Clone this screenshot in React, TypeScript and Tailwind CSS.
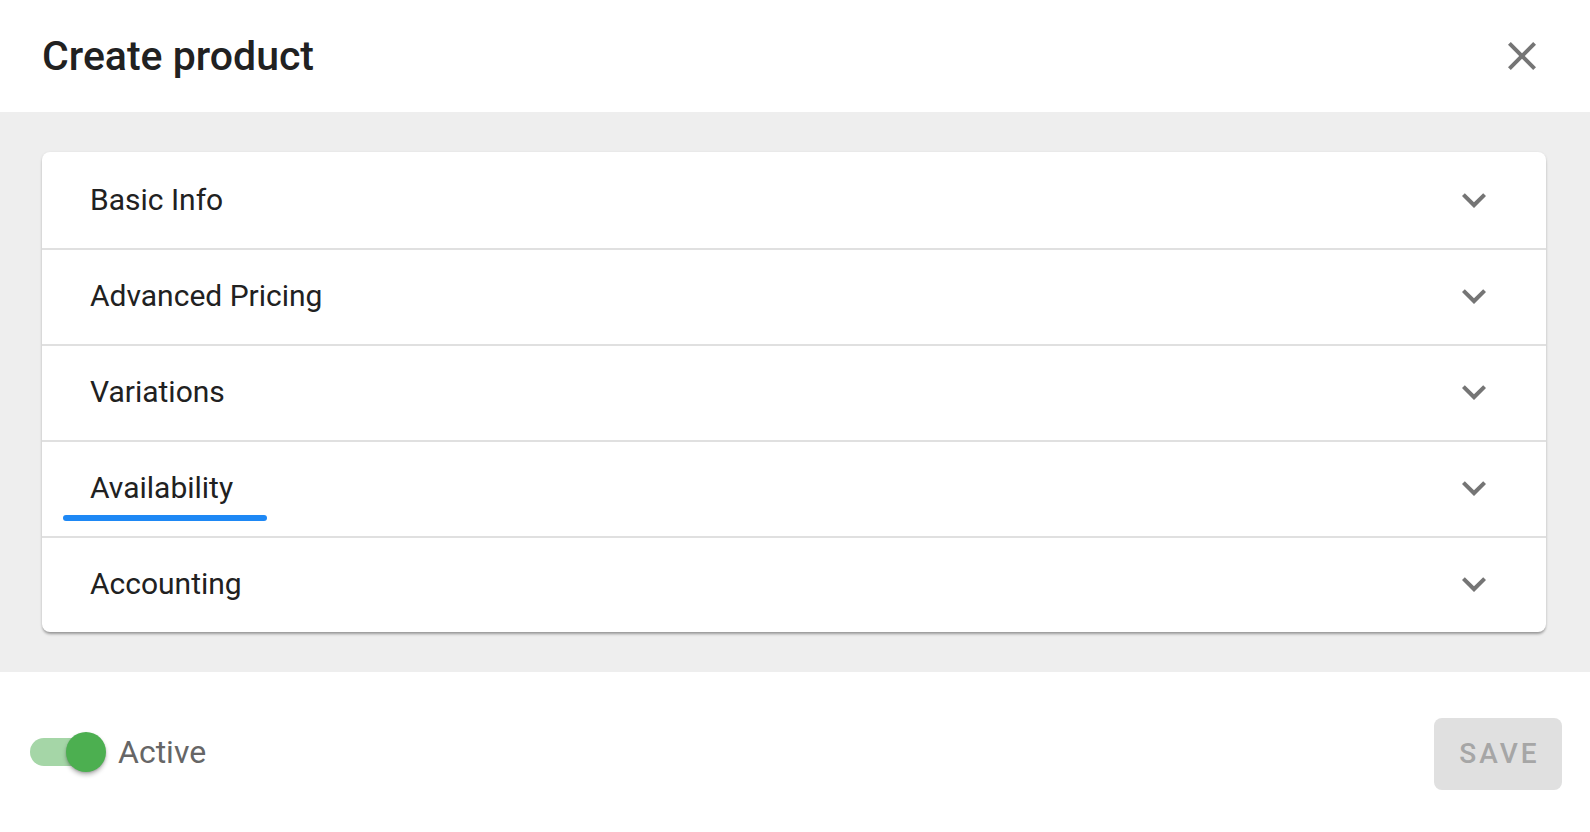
import React, { useState } from 'react';

const sections = ['Basic Info', 'Advanced Pricing', 'Variations', 'Availability', 'Accounting'];

const ExpandIcon = () => (
  <svg viewBox="0 0 24 24" className="w-12 h-12 fill-[#757575]">
    <path d="M16.59 8.59 12 13.17 7.41 8.59 6 10l6 6 6-6z" />
  </svg>
);

const CloseIcon = () => (
  <svg viewBox="0 0 24 24" className="w-12 h-12 fill-[#757575]">
    <path d="M19 6.41 17.59 5 12 10.59 6.41 5 5 6.41 10.59 12 5 17.59 6.41 19 12 13.41 17.59 19 19 17.59 13.41 12z" />
  </svg>
);

const App = () => {
  const [active, setActive] = useState(true);

  return (
    <div className="w-[1590px] h-[832px] bg-white flex flex-col font-['Roboto',sans-serif]">
      {/* Header */}
      <div className="h-[112px] flex items-center justify-between pl-[42px] pr-[44px]">
        <h1 className="text-[41px] font-medium text-[#212121] leading-none">Create product</h1>
        <button className="w-12 h-12 flex items-center justify-center">
          <CloseIcon />
        </button>
      </div>

      {/* Accordion area */}
      <div className="bg-[#eeeeee] pt-[40px] pb-[40px] pl-[42px] pr-[44px]">
        <div className="bg-white rounded-[8px] shadow-[0_3px_3px_-1px_rgba(0,0,0,0.3),0_1px_3px_rgba(0,0,0,0.14)] overflow-hidden">
          {sections.map((name, i) => (
            <div
              key={name}
              className={`relative h-[96px] flex items-center justify-between pl-[48px] pr-[48px] ${
                i > 0 ? 'border-t-2 border-[#e0e0e0] pb-[2px]' : ''
              }`}
            >
              <span className="text-[30px] text-[#212121] leading-none">{name}</span>
              <ExpandIcon />
              {/* focus underline */}
              {name === 'Availability' && (
                <div className="absolute left-[21px] top-[73px] w-[204px] h-[6px] rounded-full bg-[#1e88f5]" />
              )}
            </div>
          ))}
        </div>
      </div>

      {/* Footer */}
      <div className="flex-1 flex items-center justify-between pl-[30px] pr-[28px]">
        <div className="flex items-center">
          <button
            onClick={() => setActive(!active)}
            className="relative w-[76px] h-[40px]"
          >
            <div className={`absolute left-0 top-[6px] w-[68px] h-[28px] rounded-full ${active ? 'bg-[#a5d6a7]' : 'bg-[#bdbdbd]'}`} />
            <div
              className={`absolute top-0 w-10 h-10 rounded-full shadow-[0_3px_4px_rgba(0,0,0,0.25),0_1px_2px_rgba(0,0,0,0.15)] ${
                active ? 'left-[36px] bg-[#4caf50]' : 'left-0 bg-[#fafafa]'
              }`}
            />
          </button>
          <span className="ml-[12px] text-[32px] text-[#666666] leading-none">Active</span>
        </div>
        <button
          disabled
          className="mt-[4px] w-[128px] h-[72px] rounded-[8px] bg-[#e0e0e0] text-[#a6a6a6] text-[28px] font-medium tracking-[3px] pl-[3px] flex items-center justify-center"
        >
          SAVE
        </button>
      </div>
    </div>
  );
};

export default App;
